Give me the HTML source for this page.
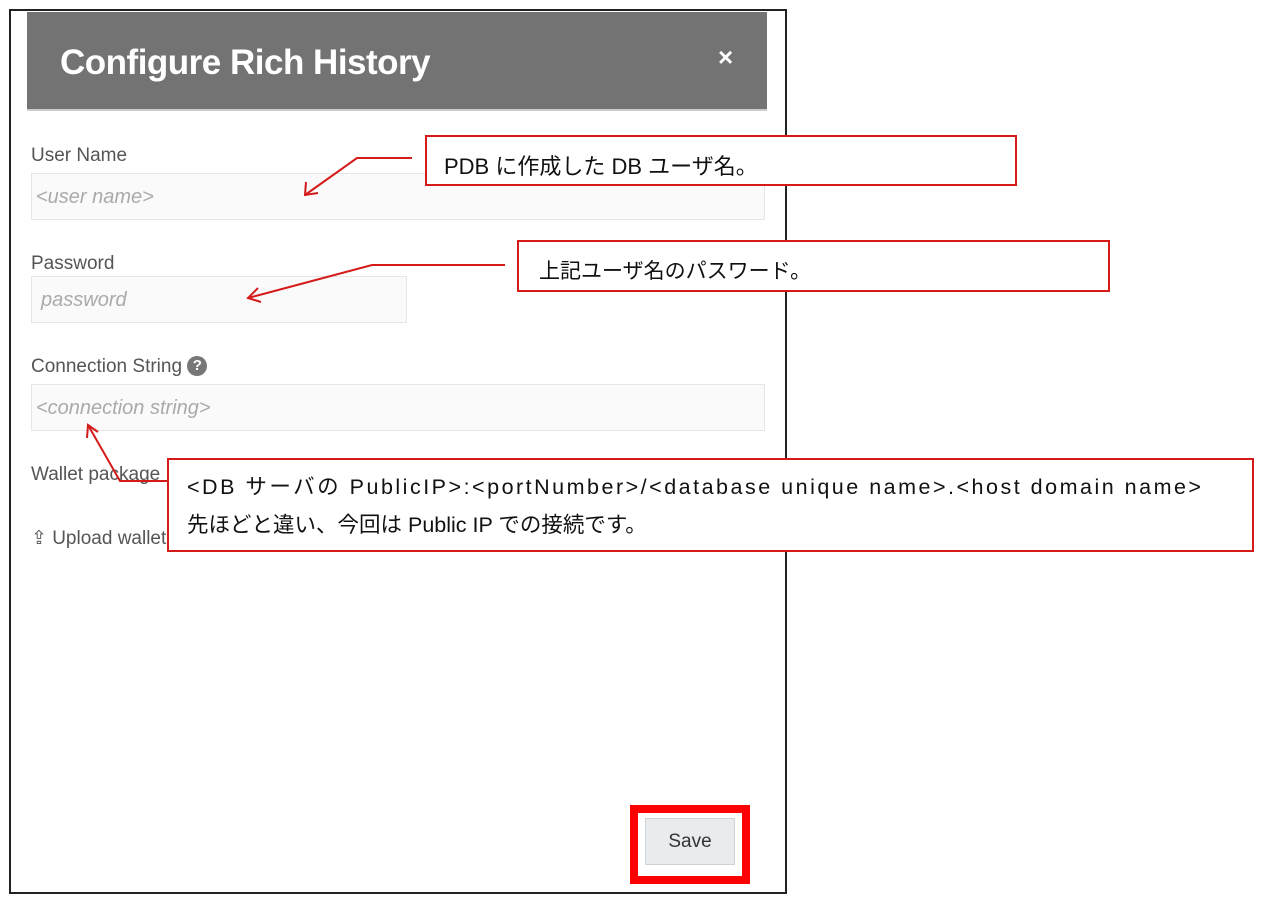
<!DOCTYPE html>
<html><head><meta charset="utf-8"><style>
body{margin:0;width:1262px;height:902px;background:#fff;position:relative;overflow:hidden;font-family:"Liberation Sans","Noto Sans CJK JP",sans-serif}
.a{position:absolute}
.dlg{left:9px;top:9px;width:774px;height:881px;border:2px solid #222;box-sizing:content-box}
.hdr{left:27px;top:12px;width:740px;height:97px;background:#737373;border-bottom:2px solid #ccc}
.t{color:#fff;font-size:35px;font-weight:bold;left:60px;top:43px;letter-spacing:-0.5px}
.lbl{color:#555;font-size:19px}
.in{background:#fafafa;border:1px solid #e6e6e6;color:#aaa;font-style:italic;font-size:20px;box-sizing:border-box;padding:12px 4px}
.co{border:2px solid #d51a1a;background:#fff;font-size:21px;color:#111;box-sizing:border-box}
</style></head><body>
<div class="a dlg"></div>
<div class="a hdr"></div>
<div class="a t">Configure Rich History</div>
<div class="a" style="left:718px;top:42px;color:#fff;font-size:26px;font-weight:bold">×</div>
<div class="a lbl" style="left:31px;top:145px">User Name</div>
<div class="a in" style="left:31px;top:173px;width:734px;height:47px">&lt;user name&gt;</div>
<div class="a lbl" style="left:31px;top:253px">Password</div>
<div class="a in" style="left:31px;top:276px;width:376px;height:47px;padding-left:9px">password</div>
<div class="a lbl" style="left:31px;top:356px">Connection String <span style="display:inline-block;width:20px;height:20px;border-radius:50%;background:#777;color:#fff;font-size:15px;text-align:center;line-height:20px;font-weight:bold;vertical-align:2px">?</span></div>
<div class="a in" style="left:31px;top:384px;width:734px;height:47px">&lt;connection string&gt;</div>
<div class="a lbl" style="left:31px;top:464px">Wallet package</div>
<div class="a lbl" style="left:31px;top:527px">⇪ Upload wallet</div>
<div class="a" style="left:630px;top:805px;width:120px;height:79px;border:8px solid #f00;box-sizing:border-box"></div>
<div class="a" style="left:645px;top:818px;width:90px;height:47px;background:#e9ecef;border:1px solid #d0d3d6;box-sizing:border-box;font-size:19px;color:#333;text-align:center;line-height:45px">Save</div>
<svg class="a" style="left:0;top:0" width="1262" height="902">
<g stroke="#d51a1a" stroke-width="2" fill="none">
<polyline points="412,158 357,158 305,195"/><polyline points="306,182 305,195 318,193"/>
<polyline points="505,265 372,265 248,298"/><polyline points="258,288 248,298 261,302"/>
<polyline points="168,481 120,481 88,425"/><polyline points="87,438 88,425 98,432"/>
</g></svg>
<div class="a co" style="left:425px;top:135px;width:592px;height:51px;padding:12px 0 0 17px;font-size:22px">PDB に作成した DB ユーザ名。</div>
<div class="a co" style="left:517px;top:240px;width:593px;height:52px;padding:13px 0 0 20px">上記ユーザ名のパスワード。</div>
<div class="a co" style="left:167px;top:458px;width:1087px;height:94px;padding:8px 0 0 18px;line-height:38px;font-size:21.5px"><span style="letter-spacing:2.5px">&lt;DB サーバの PublicIP&gt;:&lt;portNumber&gt;/&lt;database unique name&gt;.&lt;host domain name&gt;</span><br>先ほどと違い、今回は Public IP での接続です。</div>
</body></html>
